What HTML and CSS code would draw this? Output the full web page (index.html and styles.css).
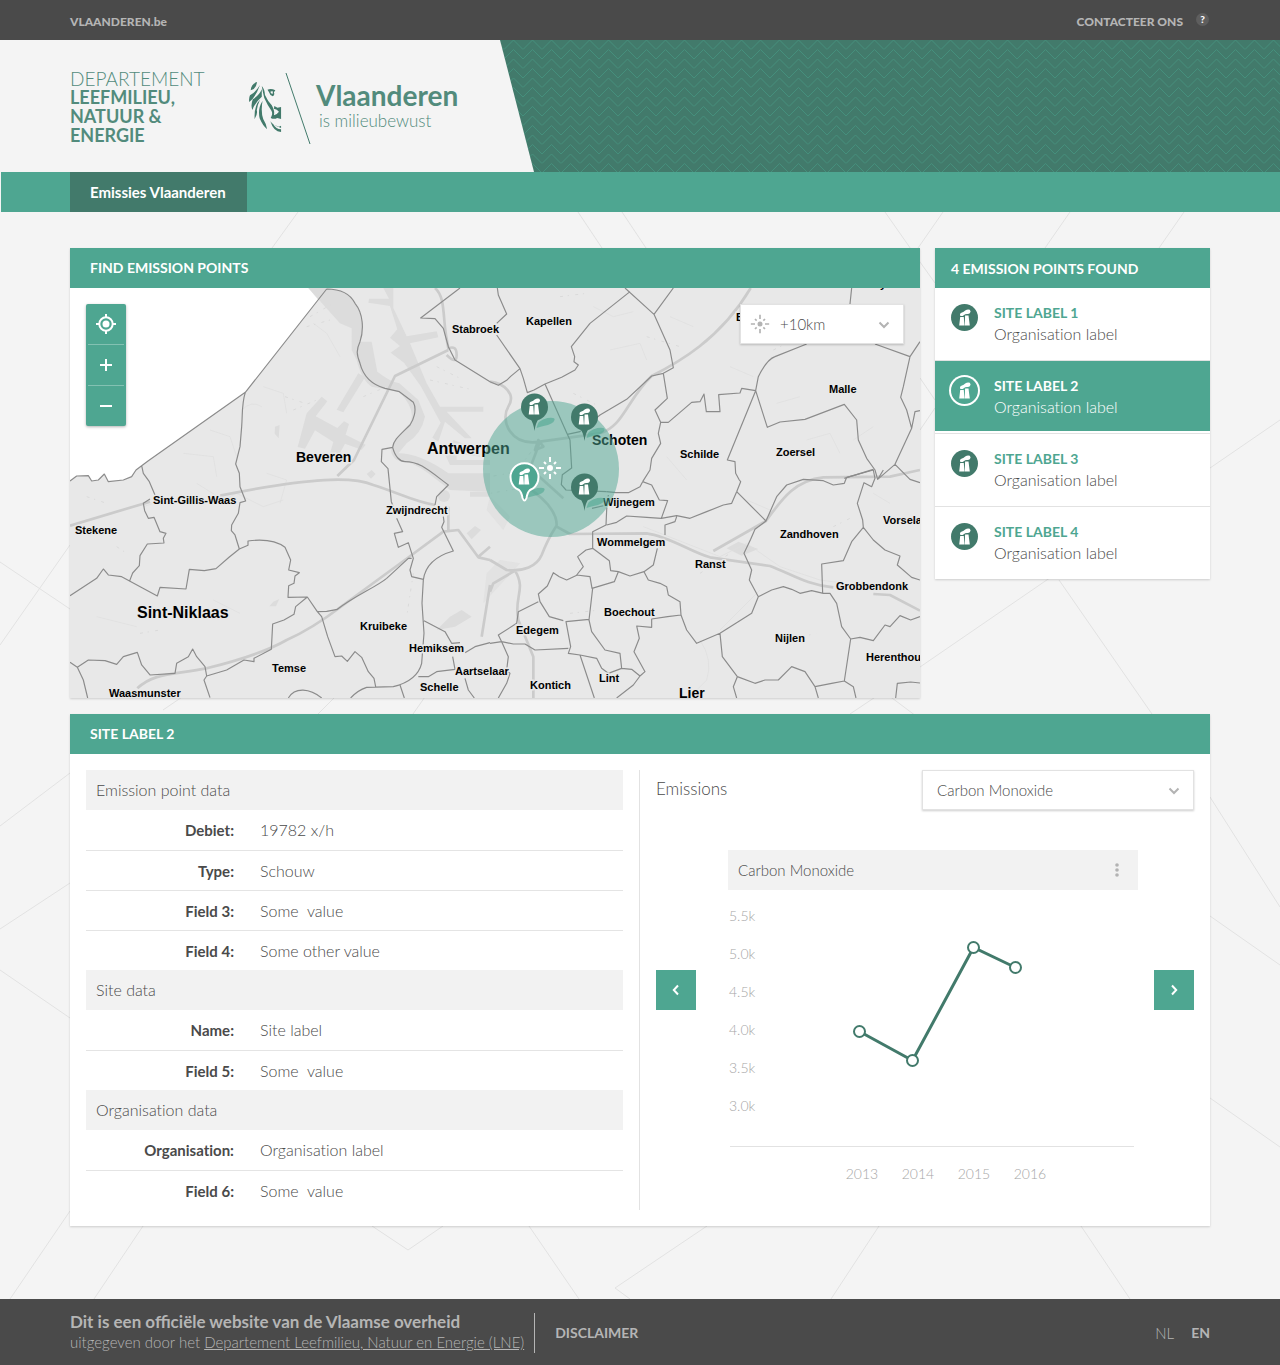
FILE: index.html
```html
<!DOCTYPE html>
<html lang="en">
<head>
<meta charset="utf-8">
<meta name="viewport" content="width=device-width, initial-scale=1">
<title>Emissies Vlaanderen</title>
<link rel="stylesheet" href="styles.css">
</head>
<body>
<svg class="defs" width="0" height="0" aria-hidden="true">
  <symbol id="factory" viewBox="-9 -9 18 18">
    <path d="M-5.8 7.500-4.800-1h3.600l.6 8.500zM-.3 7.500.1-2.600h3.400l1.300 10.100zM-4.800-2.200Q-5.700-4.800-3-5.600-1.200-6 .2-7.400 2.400-9 4.800-8.200q1.600 1.800 0 3.400Q4-3.800 2-4 0-4-1.200-2.800-3-1.400-4.800-2.200z" fill="#fff"/>
  </symbol>
  <symbol id="locator" viewBox="-12 -12 24 24">
    <circle r="3" fill="currentColor"/>
    <path d="M0-11v5M0 11V6M-11 0h5M11 0H6M-6-6l2 2M6-6 4-4M-6 6l2-2M6 6 4 4" stroke="currentColor" stroke-width="2" fill="none"/>
  </symbol>
  <symbol id="pin" viewBox="-20 -20 56 56">
    <path d="M2 21Q3 13 13 11q8-1 7 2-1 4-11 6-4 1-7 2z" fill="#4ea691" opacity=".6"/>
    <path d="M-4 12h8Q1 16 0 24-1 16-4 12z" fill="#427a6b"/>
    <circle r="13.500" fill="#427a6b"/>
    <use href="#factory" x="-9" y="-9" width="18" height="18"/>
  </symbol>
  <symbol id="pin-active" viewBox="-20 -20 56 56">
    <path d="M2 21Q3 13 13 11q8-1 7 2-1 4-11 6-4 1-7 2z" fill="#4ea691" opacity=".6"/>
    <path d="M-5.500 13A14 14 0 1 1 5.500 13Q3 15 2 21 0 26-2 21-3 15-5.500 13z" fill="#4ea691" stroke="#fff" stroke-width="2"/>
    <use href="#factory" x="-9" y="-9" width="18" height="18"/>
  </symbol>
</svg>

<div class="topbar">
  <a href="#">VLAANDEREN.be</a>
  <div class="topbar-right">
    <a href="#">CONTACTEER ONS</a>
    <button class="help" type="button" aria-label="Help">?</button>
  </div>
</div>

<header class="masthead">
  <div class="brand">
    <div class="department">DEPARTEMENT<strong>LEEFMILIEU,<br>NATUUR &amp;<br>ENERGIE</strong></div>
    <svg class="lion" width="64" height="74" viewBox="248 71 64 74" aria-hidden="true">
      <g transform="scale(.35714 .33333)" fill="#427a6b">
        <path d="M720 246Q703 251 702 271 717 267 720 246zM728 255Q714 279 700 286 696 295 698 306 716 291 728 255zM733 268Q726 286 708 298 701 316 707 330 712 310 733 290zM728 299Q711 316 713 357 722 343 719 331 721 314 728 299zM735 303Q721 326 727 355 736 378 748 388 745 370 737 357 730 336 735 303z"/>
        <path d="M733 258Q741 267 742 285 750 304 761 316 770 333 767 346 777 342 781 335 776 328 767 326L768 318 777 323 787 321V357L776 354Q768 359 758 354 765 340 760 332 750 318 740 294 736 278 733 258zM749 269Q759 264 771 271L767 277Q770 285 764 289 755 285 753 276zM757 275Q758 281 763 282 765 277 763 273zM757 364Q766 377 781 380L787 377V396Q766 396 757 364zM765 373Q774 379 787 384V388Q773 388 765 373z" fill-rule="evenodd"/>
      </g>
      <path d="M286 73l24 71" stroke="#427a6b" fill="none"/>
    </svg>
    <div class="wordmark"><strong>Vlaanderen</strong><span>is milieubewust</span></div>
  </div>
</header>

<nav class="mainnav"><a href="#" aria-current="page">Emissies Vlaanderen</a></nav>

<main>
  <svg class="backdrop" viewBox="0 212 1280 1087" preserveAspectRatio="xMidYMin slice" aria-hidden="true">
    <path d="M298 212l-26 36M578 212l24 36M622 212l24 36M885 212l35 50 15 21M943 212l-25 36M1070 212l-25 36M1184 212l-25 36M920 378l15 22M920 430l15-22M0 645l70-100M0 562l70 47M163 710l22-15M318 714l20-20M413 714l14-20M850 714l70-47L1280 420M1059 580l93 134M888 695l28 21M0 826l70-53M0 929l70-46M0 970l70 48M10 1299l60-88M94 1299l49-73M372 1226l36 24 35-24M529 1226l50 73M707 1226l-92 62 15 11M879 1226l-48 73M1081 1226l49 73M1210 797l70 110M1210 916l70 49M1210 1098l70 49"/>
  </svg>

  <div class="overview">
    <section class="card map-card">
      <h2>FIND EMISSION POINTS</h2>
      <div class="map">
        <svg class="map-drawing" viewBox="70 288 850 410" preserveAspectRatio="xMidYMid slice" role="img" aria-label="Map of the Antwerp area">
          <rect x="70" y="288" width="850" height="410" fill="#fff"/>
          <g transform="translate(60 240) scale(.33333)">
            <path fill="#e8e8e8" d="M745 144L775 180 556 457 265 662 245 677 228 690 215 710 190 720 145 725 133 702 115 720 95 723 85 707 50 708 30 723V1380H2590V140z"/>
            <!-- Scheldt and docks -->
            <g fill="#dcdcdc">
              <path d="M745 144H800Q870 155 885 190 912 225 905 290L900 305H935L952 395Q990 425 1018 430L1075 480 1095 530Q1085 580 1040 610L1015 640Q1080 640 1165 700L1290 700V755L1170 750 1105 700Q1060 665 1010 660 985 640 998 615 1010 590 1050 550 1070 510 1018 455L935 440Q905 420 890 360L875 330V265L840 250z"/>
              <path d="M970 144h30v60l40 85 90-15 5 18-85 18 50 120 40 70h130v15h-110l75 80-20 0-60-50-20 60-18-12 25-45-60-110-50-70-40-30 28-20-30-25 22-25-22-70-65-10 2-12 60 0zM895 400l20 12-65 105-20-8zM740 520l45-50 17 14-35 45 65 35 20-20 15 8-10 32 60 30-12 15-50-18-30 55-20-10 15-50-55-35-30 55-22-5z"/>
              <path d="M1140 610l20 20 20-30 80 30v20l-70-10v20h100v15h-120zM1130 1170l40-40 35-20 30 20-50 30zM1220 880l25-22 18 12-28 28z"/>
              <circle cx="1152" cy="768" r="18"/><path d="M1230 755h60v15h-60zM2000 925l35-20 60 22-50 20zM640 1085l18-8-10 22-20 0zM920 702l15-12 12 12-14 14zM645 560l14-5-3 40-12-14z"/>
              <path d="M1280 1000l40-40 60 10-110 120zM1290 770l60 60-20 40-50-60z" opacity=".5"/>
            </g>
            <!-- local streets -->
            <path stroke="#dedede" stroke-width="2" fill="none" d="M610 440l60 20 10 60M450 570l60 20 20 60M370 640l90 10 10 60M760 250l40 30 40 70M545 510q30-30 60-10M250 800l60-20M410 730l80 50 40-20 80 40 60-20M620 700l60 20-20 70M110 1130l120 30M460 1080l80 40M1600 200l60 30 60-15M1650 330l90-20 20 50M1830 230l70 30M2010 380l70 30M2150 490l70-20M1820 650l60 70M2060 780l70 30M2240 600l70-20 30 60M1750 860l230 90 80-40 100 70 120 40 220 30M1980 1170q60-60 120-120M1920 1200q40 60 20 120l-50 50M2440 760l50 30M2440 560l-60 40"/>
            <path stroke="#dadada" stroke-width="3" fill="none" stroke-dasharray="9 14 4 19" d="M750 230l70-40M740 260l70-20M675 470l60 20M700 510l70-30M1110 420l130 30M1130 380l80 40M910 470l70-30M80 770l60 20M170 920l30 20M240 1180l60-10M1500 170l80-10M1540 460l80 40M1760 290l100 30M1400 690l-110 20M1410 740l-120 20M2140 330l80-40M2320 260l60-30M1920 1000l90-60M2180 1200l90-20M1530 1120l90-10M2320 860l60-30M1060 1000l-20 130M1440 600l-60 80"/>
            <!-- motorways -->
            <g stroke="#cbcbcb" stroke-width="8" fill="none" stroke-linejoin="round">
              <path d="M1125 144C1155 170 1148 220 1158 285L1165 325q25-10 25 20t-30 0M1165 330L1005 408 882 660 832 708"/>
              <path d="M2072 144C1980 300 1850 370 1775 408 1700 480 1690 560 1620 580L1440 605C1350 620 1320 540 1345 500 1370 460 1330 430 1290 425M1440 605l-30 80 100 90M1435 600l15 20-25 10z"/>
              <path d="M30 857L270 785M480 767C760 710 880 710 940 735 1020 760 1060 785 1125 795M232 1345C280 1300 330 1305 440 1285 540 1260 620 1235 680 1200 760 1165 830 1110 850 1095L1055 945 1150 875 1195 870 1255 952 1290 960M1165 800v70M1255 950l35-30M1290 1035l-25 155"/>
              <path d="M1290 960l50 30C1390 995 1430 980 1445 945 1470 880 1490 860 1490 855 1490 820 1460 780 1400 740M1490 860l40 22 230-2C1830 890 1890 935 1950 952L2130 978C2190 1000 2240 1035 2320 1042M2440 1062l50 3 90 47M1960 933L2118 843C2170 770 2210 720 2290 712L2490 710 2580 690M1365 992C1400 1050 1360 1070 1375 1140L1420 1250V1374M1365 992l-65 38-10 25"/>
            </g>
            <!-- municipal borders, west -->
            <g stroke="#8b8b8b" stroke-width="3.500" fill="none" stroke-linejoin="round">
              <path d="M800 147L556 457 265 662 245 677 228 690 215 710 190 720 145 725 133 702 115 720 95 723 85 707 50 708 30 723M800 147C840 147 870 160 885 190 910 220 912 270 900 305 888 330 890 345 900 370 910 410 940 435 975 445L1018 455 1060 487C1072 510 1060 540 1050 555 1020 585 1000 600 998 622 1005 650 1020 665 1035 665 1080 665 1105 690 1165 735L1130 770 1125 795M556 457C545 490 548 520 545 560L540 620 527 672 538 700 540 740 557 783 540 788 535 820 515 855 514 872 525 885 538 927M245 677l5 23 18 25 17 40M998 622l-32 6-2 37 20 21 10 99 6 15M1200 144L1082 234l43 2 25 29 15 55 20 40 105 65"/>
              <g transform="translate(0 690)">
                <path d="M270 87L250 100l4 22 11 23 17-3 18 43 18 5-8 15 2 14-50 3-22 35-2 30-20 22-10 26M30 377l80-52 20-28 15 18 40 5 107 58 8-26 78 5 10-59 45 4 35-6 40-35 30-24 26-11V213C610 207 650 213 675 232l17 38-6 30 32 8-13 10-3 22-16 7-2 35 58-1 30 44 13 15 18 60 22 60 20-2 17 16 23-29 20 17 20 43 17 20 5 25M742 381l-35 29-5 23-30 17-34 12-4 76-52 27v10l-30-5-52 30-60 18-8 12 18 53M30 577l22 15 33-22 50 2 35 11 20-23 42-13 13 38 25 30 75-5 5-30 35-20 13-23 12 23 25 30 5 28M52 592l18 38 13 54M772 425l28-1 32-6C880 380 950 350 980 325l65-60 10 0M1010 145l18 40-25 5 12 42 30-14 15 47-10 35 5 20 35 8M1150 140l2 15-7 17 35 71C1120 260 1095 290 1090 330l-4 70 6 90-7 90C1075 620 1040 640 1000 650l-80 2C895 660 880 675 872 684M1020 645l13 39M685 684C705 650 750 655 785 684M1092 452l63 33 20 35 25-2M1215 548l30-18 45-12M1178 560l7 38-55 7-25 15-30 0M1215 625l10 35 18 24"/>
              </g>
            </g>
            <!-- municipal borders, east -->
            <g stroke="#8b8b8b" stroke-width="3.500" fill="none" stroke-linejoin="round" transform="translate(1290 0)">
              <path d="M22 144l3 21 25 57-30 28M20 285l70 101 10 29 12 43 20-8 33-18 50-20 40-22 10-15-13-10 2-15-10-30 56-70 120-95M0 425l25 11 25-15 12-12 28-23M405 144l87 79 58-79M492 223l48 107 10 53-30 17-35 8-75 70-80 47-60 50-38 8-67-151M232 583l8 17 5 84-28 20-3 30 14 16 122 5M520 400l12 75-37 35 17 37h23l70-60 25-2 12-23 7 53h41l-4-51 64-5 5-14 42 7 8-42C820 380 840 355 855 350l95-38M797 452l35 110 38-16 75-8 118-45 37 47 5 60 25 55 25 35 8 28 52-45 50-108-15-55-18-38 8-32 20-90-105-38M1260 350l30-45M1265 565l10-50 15-3M797 452l-85 208 23 5 2 35 11 20 4 5-12 30M512 547l-7 33 7 30-27 45-5 35-22 35M1215 673l45 45 30 10M1085 144l-5 48M1063 715l87-27"/>
              <g transform="translate(0 690)">
                <path d="M458 35l-8 15-35 18-37 0-28-3M458 35l27 10 23 45 25 2-19 53 46-8 40 8 50-20 50-20 25-5 15-35M740 65l88 88-33 25-13 30-20 42 23 50-7 30 27 50 40-20 35-10 25 8 25 12 35-8 35 8h20l20 30 15 70 27 37-19 126M350 165l30-8 30-19 60 4 44 3M355 75l-5 45-2 45-40 20v50l-20 5-25 20 17 30-20 25 40 5 6 35 67-20 12-30M350 105l-44 10M308 235l50 37 4 30 23 3 35 13 42-13 28-20 12-50M525 195v-30l30-10 5-15M462 305l13 25 35 10 20 10 5 25 35 20 3 40-40 5-48 7v25l-45-4 8 37-16 40 33 60-15 13-20 27-50 39M308 355l-11 95 8 35 40 55 45 10 5 45-40 15-20-15-15-30-50-10-35-5 7-20-14-75 69-7M262 315l-32 15-22-10-18-12-18 40-27 24 5 23 28 45 42 12M145 395l-60 30-5 35-55 35 10 20 35 7 35 0 30 18 100-5M0 520l35-5 20 45-5 40 10 10-10 30-25 44M270 555l43 129M395 595l30 3 25 20M573 435l17 45 30 40 70-30 95-60 20-50M690 490l7 70 45 60 53 20 30-10 40 0 40-40 40 15 30 45 50-10 38-7 27 17 8 34M742 620l-12 30 10 34M975 650l10 34M828 153l32-73 30-35 50-17 60 4 30 13 33-5 7-18 80-22 5 25-10 25-23-12-20 62 16 50 2 22-35 43-25 57-65 10 3 88M1120 172l30 38 35 30 45 18-8 27 43 37 25 8M1165 25l15-25M1082 507l28-5 40 10 35-47 15 5 30-33 32 13 28-10M1217 684l5-44 40-4 28 3"/>
              </g>
            </g>
          </g>
          <g class="places">
            <text x="452" y="333">Stabroek</text><text x="526" y="325">Kapellen</text><text x="829" y="393">Malle</text><text x="736" y="321">B</text><text x="880" y="288">y</text>
            <text x="680" y="458">Schilde</text><text x="776" y="456">Zoersel</text><text x="153" y="504">Sint-Gillis-Waas</text><text x="75" y="534">Stekene</text>
            <text x="386" y="514">Zwijndrecht</text><text x="603" y="506">Wijnegem</text><text x="597" y="546">Wommelgem</text><text x="780" y="538">Zandhoven</text><text x="883" y="524">Vorselaar</text>
            <text x="695" y="568">Ranst</text><text x="836" y="590">Grobbendonk</text><text x="604" y="616">Boechout</text><text x="775" y="642">Nijlen</text><text x="866" y="661">Herenthout</text>
            <text x="360" y="630">Kruibeke</text><text x="516" y="634">Edegem</text><text x="409" y="652">Hemiksem</text><text x="272" y="672">Temse</text><text x="455" y="675">Aartselaar</text>
            <text x="420" y="691">Schelle</text><text x="530" y="689">Kontich</text><text x="599" y="682">Lint</text><text x="109" y="697">Waasmunster</text>
            <g class="town"><text x="296" y="462">Beveren</text><text x="592" y="445">Schoten</text><text x="679" y="698">Lier</text></g>
            <g class="city"><text x="427" y="454">Antwerpen</text><text x="137" y="618">Sint-Niklaas</text></g>
          </g>
          <circle cx="551" cy="469" r="68" fill="#4ea691" opacity=".5"/>
          <use href="#locator" x="538" y="456" width="24" height="24" color="#fff"/>
          <use href="#pin" x="514.500" y="387" width="56" height="56"/>
          <use href="#pin" x="564.500" y="397" width="56" height="56"/>
          <use href="#pin" x="564.500" y="467" width="56" height="56"/>
          <use href="#pin-active" x="504.500" y="457" width="56" height="56"/>
        </svg>
        <div class="map-tools">
          <button type="button" aria-label="My location"><svg width="20" height="20" viewBox="-10 -10 20 20"><circle r="3.500" fill="#fff"/><circle r="6.700" fill="none" stroke="#fff" stroke-width="2"/><path d="M0-10v3M0 10V7M-10 0h3M10 0H7" stroke="#fff" stroke-width="2"/></svg></button>
          <button type="button" aria-label="Zoom in"><svg width="20" height="20" viewBox="-10 -10 20 20"><path d="M-6 0H6M0-6V6" stroke="#fff" stroke-width="2"/></svg></button>
          <button type="button" aria-label="Zoom out"><svg width="20" height="20" viewBox="-10 -10 20 20"><path d="M-6 0H6" stroke="#fff" stroke-width="2"/></svg></button>
        </div>
        <div class="dropdown radius">
          <svg class="dropdown-icon" width="20" height="20" aria-hidden="true"><use href="#locator" width="20" height="20"/></svg>
          <select aria-label="Search radius"><option>+10km</option><option>+20km</option></select>
          <svg class="chevron" width="12" height="8" viewBox="0 0 12 8" aria-hidden="true"><path d="M1.500 1.500 6 6l4.500-4.500"/></svg>
        </div>
      </div>
    </section>

    <section class="card results">
      <h2>4 EMISSION POINTS FOUND</h2>
      <ul>
        <li><a href="#"><span class="badge"><svg width="18" height="18"><use href="#factory"/></svg></span><span><strong>SITE LABEL 1</strong>Organisation label</span></a></li>
        <li class="active"><a href="#" aria-current="true"><span class="badge"><svg width="18" height="18"><use href="#factory"/></svg></span><span><strong>SITE LABEL 2</strong>Organisation label</span></a></li>
        <li><a href="#"><span class="badge"><svg width="18" height="18"><use href="#factory"/></svg></span><span><strong>SITE LABEL 3</strong>Organisation label</span></a></li>
        <li><a href="#"><span class="badge"><svg width="18" height="18"><use href="#factory"/></svg></span><span><strong>SITE LABEL 4</strong>Organisation label</span></a></li>
      </ul>
    </section>
  </div>

  <section class="card">
    <h2>SITE LABEL 2</h2>
    <div class="detail">
      <table class="facts">
        <colgroup><col class="name-col"><col></colgroup>
        <tbody>
          <tr class="group"><th colspan="2" scope="colgroup">Emission point data</th></tr>
          <tr><th scope="row">Debiet:</th><td>19782 x/h</td></tr>
          <tr><th scope="row">Type:</th><td>Schouw</td></tr>
          <tr><th scope="row">Field 3:</th><td>Some&nbsp; value</td></tr>
          <tr><th scope="row">Field 4:</th><td>Some other value</td></tr>
        </tbody>
        <tbody>
          <tr class="group"><th colspan="2" scope="colgroup">Site data</th></tr>
          <tr><th scope="row">Name:</th><td>Site label</td></tr>
          <tr><th scope="row">Field 5:</th><td>Some&nbsp; value</td></tr>
        </tbody>
        <tbody>
          <tr class="group"><th colspan="2" scope="colgroup">Organisation data</th></tr>
          <tr><th scope="row">Organisation:</th><td>Organisation label</td></tr>
          <tr><th scope="row">Field 6:</th><td>Some&nbsp; value</td></tr>
        </tbody>
      </table>
      <div class="emissions">
        <div class="emissions-head">
          <label for="substance">Emissions</label>
          <div class="dropdown substance">
            <select id="substance"><option>Carbon Monoxide</option><option>Methane</option></select>
            <svg class="chevron" width="12" height="8" viewBox="0 0 12 8" aria-hidden="true"><path d="M1.500 1.500 6 6l4.500-4.500"/></svg>
          </div>
        </div>
        <div class="carousel">
          <button type="button" aria-label="Previous"><svg width="8" height="12" viewBox="0 0 8 12"><path d="M6 1.500 1.800 6 6 10.500"/></svg></button>
          <figure>
            <figcaption>Carbon Monoxide <button type="button" aria-label="Chart options"><svg width="4" height="14" viewBox="0 0 4 14" fill="#b3b3b3"><circle cx="2" cy="2" r="1.800"/><circle cx="2" cy="7" r="1.800"/><circle cx="2" cy="12" r="1.800"/></svg></button></figcaption>
            <svg class="chart" viewBox="728 890 410 320" role="img" aria-label="Carbon monoxide per year">
              <g class="axis">
                <text x="729" y="921">5.5k</text><text x="729" y="959">5.0k</text><text x="729" y="997">4.5k</text><text x="729" y="1035">4.0k</text><text x="729" y="1073">3.5k</text><text x="729" y="1111">3.0k</text>
                <text x="862" y="1179" text-anchor="middle">2013</text><text x="918" y="1179" text-anchor="middle">2014</text><text x="974" y="1179" text-anchor="middle">2015</text><text x="1030" y="1179" text-anchor="middle">2016</text>
              </g>
              <path d="M730 1146.500h404" stroke="#e2e2e2"/>
              <path d="M859.500 1031.500l53 29 61-113 42 20" fill="none" stroke="#427a6b" stroke-width="3"/>
              <g fill="#fff" stroke="#427a6b" stroke-width="2"><circle cx="859.500" cy="1031.500" r="5.500"/><circle cx="912.500" cy="1060.500" r="5.500"/><circle cx="973.500" cy="947.500" r="5.500"/><circle cx="1015.500" cy="967.500" r="5.500"/></g>
            </svg>
          </figure>
          <button type="button" aria-label="Next"><svg width="8" height="12" viewBox="0 0 8 12"><path d="M2 1.500 6.200 6 2 10.500"/></svg></button>
        </div>
      </div>
    </div>
  </section>
</main>

<footer>
  <div class="publisher">
    <strong>Dit is een officiële website van de Vlaamse overheid</strong>
    <span>uitgegeven door het <a href="#">Departement Leefmilieu, Natuur en Energie (LNE)</a></span>
  </div>
  <a class="disclaimer" href="#">DISCLAIMER</a>
  <div class="languages"><a href="#">NL</a><a class="current" href="#">EN</a></div>
</footer>
</body>
</html>
```
FILE: styles.css
```css
:root {
  --green: #4ea691;
  --dark-green: #427a6b;
  --grey: #4a4a4a;
  --line: #e2e2e2;
}
* { box-sizing: border-box; }
body {
  margin: 0;
  min-height: 100vh;
  display: flex;
  flex-direction: column;
  background: #f4f4f4;
  color: var(--grey);
  font: 300 15px/20px Lato, "Open Sans", sans-serif;
  font-variant-ligatures: no-common-ligatures;
}
a { color: inherit; text-decoration: none; }
strong { font-weight: 700; }
button, select { font: inherit; color: inherit; border: 0; border-radius: 0; padding: 0; cursor: pointer; }
h2, ul, figure { margin: 0; padding: 0; }
.defs { position: absolute; }

.topbar {
  height: 40px;
  padding: 3px 70px 0;
  display: flex;
  justify-content: space-between;
  align-items: center;
  background: var(--grey);
  color: #b5b5b5;
  font-size: 12px;
  font-weight: 900;
}
.topbar-right { display: flex; align-items: center; gap: 13px; }
.help {
  width: 13px;
  height: 13px;
  margin: 0 1px 4px 0;
  border-radius: 50%;
  background: #5e5e5e;
  color: #fff;
  font-size: 10px;
  line-height: 13px;
}

.masthead {
  height: 132px;
  background: var(--dark-green) url("data:image/svg+xml,%3Csvg xmlns='http://www.w3.org/2000/svg' width='19' height='19'%3E%3Cpath d='M0 9.500 9.500 0 19 9.500M0 19 9.500 9.500 19 19' fill='none' stroke='%23458f7c'/%3E%3C/svg%3E") 10px 0;
}
.brand {
  width: 534px;
  height: 100%;
  padding: 29px 0 0 70px;
  display: flex;
  background: #f4f4f4;
  color: #528b7c;
  clip-path: polygon(0 0, 500px 0, 100% 100%, 0 100%);
}
.department { width: 178px; font-size: 19px; line-height: 19px; }
.department strong { display: block; font-size: 18px; }
.lion { margin-top: 2px; }
.wordmark { padding: 9px 0 0 4px; }
.wordmark strong { display: block; font-size: 28px; line-height: 34px; }
.wordmark span { display: block; padding-left: 3px; font-size: 17px; line-height: 18px; }

.mainnav {
  height: 40px;
  margin-left: 1px;
  padding-left: 69px;
  display: flex;
  background: var(--green);
}
.mainnav a {
  padding: 0 21px 0 20px;
  background: var(--dark-green);
  color: #fff;
  font-weight: 700;
  line-height: 40px;
}

main {
  position: relative;
  flex: 1;
  padding: 36px 70px 73px;
  display: flex;
  flex-direction: column;
  gap: 16px;
}
.backdrop {
  position: absolute;
  inset: 0;
  width: 100%;
  height: 100%;
  fill: none;
  stroke: #e2e2e2;
}
.overview { display: grid; grid-template-columns: 1fr 275px; gap: 15px; align-items: start; }
.card { position: relative; background: #fff; box-shadow: 0 1px 2px rgba(0, 0, 0, .16); }
.card h2 {
  padding: 0 20px;
  background: var(--green);
  color: #fff;
  font-size: 14px;
  font-weight: 700;
  line-height: 40px;
}
.card.results h2 { padding: 1px 16px 0; line-height: 39px; }

.map { position: relative; height: 410px; }
.map-drawing { display: block; width: 100%; height: 100%; }
.places { font: 700 11px "Liberation Sans", Arial, sans-serif; fill: #000; stroke: #e8e8e8; stroke-width: 3px; paint-order: stroke; }
.town { font-size: 14px; }
.city { font-size: 16px; }
.map-tools {
  position: absolute;
  left: 16px;
  top: 16px;
  width: 40px;
  padding: 0 2px;
  border-radius: 2px;
  background: var(--green);
  box-shadow: 0 1px 3px rgba(0, 0, 0, .3);
}
.map-tools button { width: 100%; height: 40px; display: grid; place-items: center; background: none; box-sizing: content-box; }
.map-tools button + button { border-top: 1px solid #83c1b2; }

.dropdown { position: relative; height: 40px; background: #fff; border: 1px solid var(--line); box-shadow: 0 1px 2px rgba(0, 0, 0, .2); }
.dropdown select { width: 100%; height: 100%; padding-left: 14px; appearance: none; background: none; }
.chevron { position: absolute; right: 13px; top: 16px; fill: none; stroke: #b3b3b3; stroke-width: 2; pointer-events: none; }
.dropdown.radius { position: absolute; right: 16px; top: 16px; width: 164px; }
.radius select { padding-left: 39px; }
.dropdown-icon { position: absolute; left: 9px; top: 9px; color: #b3b3b3; }

.results ul { list-style: none; }
.results li { height: 73px; border-bottom: 1px solid var(--line); }
.results li:last-child { height: 72px; border: 0; }
.results a { height: 100%; padding: 15px 16px 0; display: flex; gap: 16px; font-size: 16px; line-height: 21px; }
.results strong { display: block; color: var(--green); font-size: 14px; line-height: 20px; }
.badge { width: 27px; height: 27px; margin-top: 1px; display: grid; place-items: center; border-radius: 50%; background: var(--dark-green); }
.results .active { background: var(--green); color: #fff; box-shadow: inset 0 -2px #fff; }
.results .active strong { color: #fff; }
.active .badge { background: none; box-shadow: 0 0 0 2px #fff; }

.detail { padding: 16px; display: grid; grid-template-columns: 553fr 555fr; }
.facts { width: calc(100% - 16px); height: 440px; border-collapse: collapse; table-layout: fixed; }
.name-col { width: 154px; }
.facts tr { height: 40px; }
.facts th, .facts td { padding: 1px 0 0; border-bottom: 1px solid #e4e4e4; }
.facts th { padding-right: 6px; text-align: right; font-weight: 700; }
.facts td { padding-left: 20px; font-size: 16px; }
.facts tr:last-child > *, .facts tbody:first-of-type tr:last-child > * { border-bottom: 0; }
.facts .group th { padding: 0 10px; text-align: left; font-size: 16px; font-weight: 300; background: #f2f2f2; border: 0; }

.emissions { padding-left: 16px; border-left: 1px solid var(--line); }
.emissions-head { display: flex; justify-content: space-between; line-height: 38px; font-size: 17px; }
.substance { width: 272px; font-size: 15px; }
.carousel { padding-top: 40px; display: flex; align-items: flex-start; justify-content: space-between; }
.carousel > button { flex: none; width: 40px; height: 40px; margin-top: 120px; display: grid; place-items: center; background: var(--green); }
.carousel > button path { fill: none; stroke: #fff; stroke-width: 2; }
figure { flex: 1; margin: 0 16px 0 32px; }
figcaption { height: 40px; padding: 0 10px; display: flex; justify-content: space-between; align-items: center; background: #f2f2f2; }
figcaption button { width: 22px; height: 24px; display: grid; place-items: center; background: none; }
.chart { display: block; width: 100%; }
.axis { fill: #a6a6a6; font-size: 14px; }

footer {
  position: relative;
  height: 66px;
  padding: 2px 70px 0;
  display: flex;
  align-items: center;
  background: var(--grey);
  color: #b5b5b5;
}
.publisher { padding-right: 10px; border-right: 1px solid #b5b5b5; }
.publisher strong { display: block; font-size: 17px; line-height: 18px; font-variant-ligatures: normal; }
.publisher span { display: block; line-height: 22px; }
.publisher a { text-decoration: underline; }
.disclaimer { padding-left: 20px; font-size: 14px; font-weight: 700; }
.languages { margin-left: auto; display: flex; gap: 17px; }
.current { font-size: 14px; font-weight: 700; }
```
